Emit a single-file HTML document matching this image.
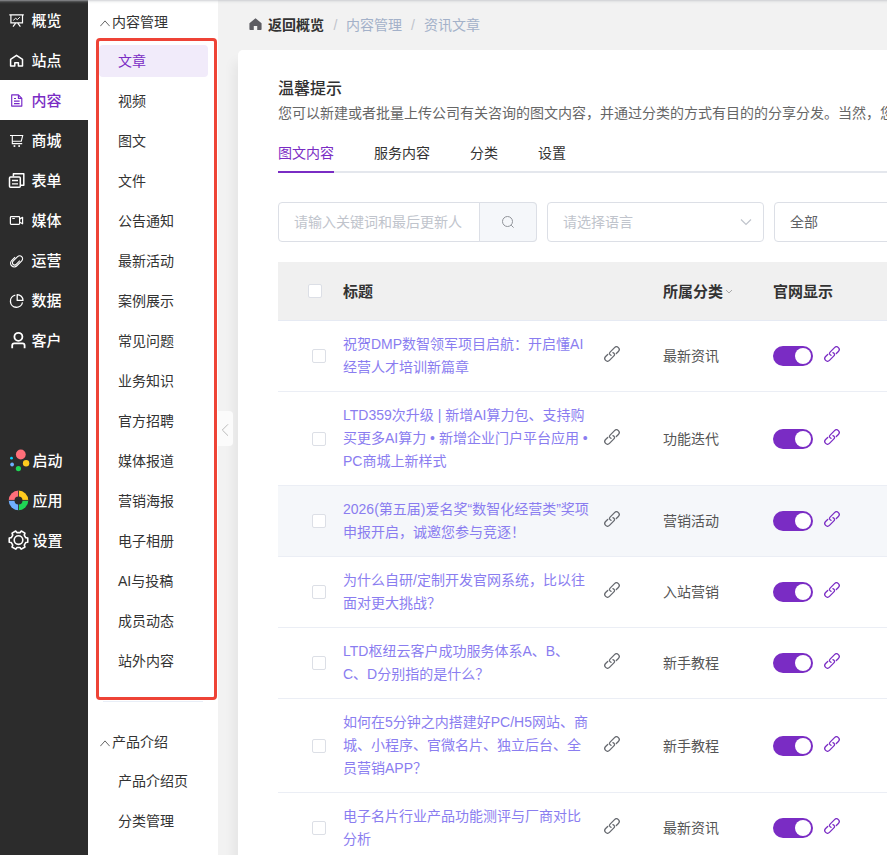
<!DOCTYPE html>
<html lang="zh-CN">
<head>
<meta charset="utf-8">
<title>资讯文章</title>
<style>
*{box-sizing:border-box;margin:0;padding:0}
html,body{width:887px;height:855px;overflow:hidden;background:#f2f2f2;font-family:"Liberation Sans","Noto Sans CJK SC",sans-serif;color:#333;}
.abs{position:absolute}
#nav1{position:absolute;left:0;top:0;width:88px;height:855px;background:#2c2c2c;}
#nav1 .it{position:absolute;left:0;width:88px;height:40px;color:#fff;font-size:15px;font-weight:500;line-height:40px;}
#nav1 .it span{position:absolute;left:31.5px;top:1px;white-space:nowrap}
#nav1 .it svg{position:absolute;}
#nav1 .it.on{background:#fff;color:#7a2cc4;}
#nav2{position:absolute;left:88px;top:0;width:130px;height:855px;background:#fff;}
#nav2 .hd{position:absolute;left:24px;font-size:14px;color:#333;line-height:20px;white-space:nowrap}
#nav2 .it{position:absolute;left:30px;font-size:14px;color:#333;line-height:20px;white-space:nowrap}
#nav2 .it.on{color:#7a2cc4}
#redbox{position:absolute;left:96px;top:38px;width:121px;height:662px;border:3px solid #ee4336;border-radius:4px;}
#card{position:absolute;left:238px;top:50px;width:660px;height:820px;background:#fff;border-radius:5px;box-shadow:-8px 8px 12px -4px rgba(0,0,0,.06);}

#bc{position:absolute;left:0;top:0;font-size:14px;line-height:20px;white-space:nowrap}
#bc span{position:absolute;top:15px}
.tt{position:absolute;left:278px;top:78px;font-size:16px;font-weight:500;color:#303030;line-height:22px;white-space:nowrap}
.desc{position:absolute;left:278px;top:103px;font-size:14px;color:#666;line-height:20px;white-space:nowrap}
.tab{position:absolute;top:143px;font-size:14px;line-height:20px;color:#333;white-space:nowrap}
.tab.on{color:#7a2cc4}
.inp{position:absolute;top:202px;height:40px;border:1px solid #dcdfe6;border-radius:4px;background:#fff;font-size:14px;line-height:38px;color:#c0c4cc;white-space:nowrap}
#thead{position:absolute;left:278px;top:262px;width:620px;height:59px;background:#f0f0f0;border-bottom:1px solid #e6eaf3}
.th{position:absolute;top:282px;font-size:15px;font-weight:700;color:#333;line-height:20px;white-space:nowrap}
.cb{position:absolute;width:14px;height:14px;border:1px solid #dcdfe6;border-radius:2px;background:#fff}
.row{position:absolute;left:278px;width:620px;border-bottom:1px solid #ebeef5}
.row.hl{background:#f5f7fa}
.row .cb{left:34px;top:50%;margin-top:-7px}
.row .ti{position:absolute;left:65px;top:12px;font-size:14px;line-height:23px;color:#8a7df0;white-space:nowrap}
.row .cat{position:absolute;left:385px;top:50%;margin-top:-10px;font-size:14px;line-height:20px;color:#555;white-space:nowrap}
.row .sw{position:absolute;left:495px;top:50%;margin-top:-10px;width:40px;height:20px;border-radius:10px;background:#7a2cc4}
.row .sw i{position:absolute;right:2px;top:2px;width:16px;height:16px;border-radius:8px;background:#fff}
.row svg.lk{position:absolute;top:50%;margin-top:-10px;width:16px;height:16px}
</style>
</head>
<body>
<div id="nav1">
  <div class="it" style="top:0"><svg style="left:8px;top:12px" width="17" height="17" viewBox="8 12 17 17" fill="none" stroke="#fff" stroke-width="1.2"><path d="M9.3 14.9H23.8M10.9 14.9V22.9H22.5V14.9M15.5 23.3L13 26.6M17.9 23.3L20.4 26.6"/><path d="M13.3 20.3L15.6 18.3L17.4 19.6L19.8 17.2" stroke-width="1"/></svg><span>概览</span></div>
  <div class="it" style="top:40px"><svg style="left:8px;top:12px" width="17" height="17" viewBox="8 52 17 17" fill="none" stroke="#fff" stroke-width="1.5" stroke-linejoin="round"><path d="M10.6 66V59.4L16.5 55.3L22.5 59.4V66H18.4V62.7H14.8V66Z"/></svg><span>站点</span></div>
  <div class="it on" style="top:80px"><svg style="left:8px;top:12px" width="17" height="17" viewBox="8 92 17 17" fill="none" stroke="#7628c8" stroke-width="1.15" stroke-linejoin="round"><path d="M11.7 94.9H18.4L21.8 98.3V106.1H11.7Z"/><path d="M18.4 94.9V98.3H21.8"/><path d="M14 98.5H16M14 101.2H19.6M14 103.7H19.6" stroke-width="1.2"/></svg><span>内容</span></div>
  <div class="it" style="top:120px"><svg style="left:8px;top:12px" width="17" height="17" viewBox="8 132 17 17" fill="none" stroke="#fff" stroke-width="1.1"><path d="M10 135.5H22.7L21.3 141.2H12.3M12.3 135.5V143.6H22.2"/><rect x="13.6" y="145.2" width="1.7" height="1.7" fill="#fff" stroke="none"/><rect x="18.3" y="145.2" width="1.7" height="1.7" fill="#fff" stroke="none"/></svg><span>商城</span></div>
  <div class="it" style="top:160px"><svg style="left:8px;top:10px" width="19" height="20" viewBox="8 170 19 20" fill="none" stroke="#fff" stroke-width="1.5" stroke-linejoin="round"><rect x="9.5" y="176.9" width="10.8" height="10.4" rx="1"/><path d="M13.4 176.5V173.8H23.8V185.2H21"/><path d="M12 180.5H18M12 183.8H18" stroke-width="1.3"/></svg><span>表单</span></div>
  <div class="it" style="top:200px"><svg style="left:8px;top:12px" width="17" height="17" viewBox="8 212 17 17" fill="none" stroke="#fff" stroke-width="1.2" stroke-linejoin="round"><rect x="10.4" y="216.7" width="9.2" height="7.7" rx="0.8"/><path d="M19.8 218.9L22.6 217.4V223.8L19.8 222.3"/><path d="M12.3 218.5H14.8" stroke-width="1"/></svg><span>媒体</span></div>
  <div class="it" style="top:240px"><svg style="left:8px;top:12px" width="17" height="17" viewBox="-8.5 -8.5 17 17" fill="none" stroke="#fff" stroke-width="1.1"><g transform="translate(0.1 0.3) rotate(-45)"><path d="M1.5 -3.7H-3.3A3.7 3.7 0 0 0 -3.3 3.7H3.6A2.95 2.95 0 0 0 3.6 -2.2H-2.8A2.2 2.2 0 0 0 -2.8 2.2H2.4"/></g></svg><span>运营</span></div>
  <div class="it" style="top:280px"><svg style="left:8px;top:12px" width="17" height="17" viewBox="8 292 17 17" fill="none" stroke="#fff" stroke-width="1.3"><path d="M15.3 295.2A6.1 6.1 0 1 0 22.5 302.4"/><path d="M17.2 294.6V300.4H23A5.8 5.8 0 0 0 17.2 294.6Z" stroke-linejoin="round"/></svg><span>数据</span></div>
  <div class="it" style="top:320px"><svg style="left:9px;top:10px" width="19" height="20" viewBox="9 330 19 20" fill="none" stroke="#fff" stroke-width="1.8"><circle cx="18.4" cy="336.8" r="4"/><path d="M12.2 348.3V345.4Q12.2 343.3 14.3 343.3H22.5Q24.6 343.3 24.6 345.4V348.3"/></svg><span>客户</span></div>
  <div class="it" style="top:440px"><svg style="left:8px;top:8px" width="23" height="24" viewBox="8 448 23 24"><circle cx="20.8" cy="454.5" r="4.9" fill="#ff6f7a"/><circle cx="26.1" cy="463.3" r="3.2" fill="#ffca1e"/><circle cx="18.4" cy="468.6" r="2.6" fill="#1fd655"/><circle cx="12.1" cy="464.5" r="1.9" fill="#6fb0ff"/><circle cx="11.5" cy="458.2" r="1.4" fill="#0ccfff"/></svg><span style="left:32.5px">启动</span></div>
  <div class="it" style="top:480px"><svg style="left:8px;top:9px" width="22" height="22" viewBox="-11 -11 22 22"><g transform="translate(-0.5 0.4)"><path d="M0 0V-9.8A9.8 9.8 0 0 0 -9.8 0Z" fill="#ff6f7a"/><path d="M0 0H9.8A9.8 9.8 0 0 0 0 -9.8Z" fill="#ffca1e"/><path d="M0 0V9.8A9.8 9.8 0 0 0 9.8 0Z" fill="#1fd655"/><path d="M0 0H-9.8A9.8 9.8 0 0 0 0 9.8Z" fill="#6fb0ff"/><circle r="4" fill="#2c2c2c"/><path d="M-10 0H10M0 -10V10" stroke="#2c2c2c" stroke-width="0.8"/></g></svg><span style="left:32.5px">应用</span></div>
  <div class="it" style="top:520px"><svg style="left:7px;top:9px" width="23" height="23" viewBox="-11.5 -11.5 23 23" fill="none" stroke="#fff" stroke-width="1.6" stroke-linejoin="round"><g transform="translate(0 -0.4)"><path d="M7.19 -2.47 L9.26 -2.14 L9.26 2.14 L7.19 2.47 L5.74 4.99 L6.48 6.95 L2.78 9.08 L1.45 7.46 L-1.45 7.46 L-2.78 9.08 L-6.48 6.95 L-5.74 4.99 L-7.19 2.47 L-9.26 2.14 L-9.26 -2.14 L-7.19 -2.47 L-5.74 -4.99 L-6.48 -6.95 L-2.78 -9.08 L-1.45 -7.46 L1.45 -7.46 L2.78 -9.08 L6.48 -6.95 L5.74 -4.99Z"/><circle r="4.3"/></g></svg><span style="left:32.5px">设置</span></div>
</div>
<div id="nav2">
  <svg class="abs" style="left:12px;top:19.5px" width="10" height="7" viewBox="0 0 10 7" fill="none" stroke="#666" stroke-width="1"><path d="M0.3 6.2L5 0.9L9.7 6.2"/></svg><div class="hd" style="top:12px">内容管理</div>
  <div class="abs" style="left:11px;top:45px;width:109px;height:32px;background:#f1ebfa;border-radius:4px"></div>
  <div class="it on" style="top:51px">文章</div>
  <div class="it" style="top:91px">视频</div>
  <div class="it" style="top:131px">图文</div>
  <div class="it" style="top:171px">文件</div>
  <div class="it" style="top:211px">公告通知</div>
  <div class="it" style="top:251px">最新活动</div>
  <div class="it" style="top:291px">案例展示</div>
  <div class="it" style="top:331px">常见问题</div>
  <div class="it" style="top:371px">业务知识</div>
  <div class="it" style="top:411px">官方招聘</div>
  <div class="it" style="top:451px">媒体报道</div>
  <div class="it" style="top:491px">营销海报</div>
  <div class="it" style="top:531px">电子相册</div>
  <div class="it" style="top:571px">AI与投稿</div>
  <div class="it" style="top:611px">成员动态</div>
  <div class="it" style="top:651px">站外内容</div>
  <svg class="abs" style="left:12px;top:739.5px" width="10" height="7" viewBox="0 0 10 7" fill="none" stroke="#666" stroke-width="1"><path d="M0.3 6.2L5 0.9L9.7 6.2"/></svg><div class="hd" style="top:732px">产品介绍</div>
  <div class="it" style="top:771px">产品介绍页</div>
  <div class="it" style="top:811px">分类管理</div>
</div>
<div class="abs" style="left:103px;top:701px;width:100px;height:1px;background:#e9eef7"></div>
<div id="redbox"></div>
<div id="card"></div>
<div class="abs" style="left:218px;top:411px;width:15px;height:35px;background:#fbfbfb;border-radius:0 4px 4px 0"></div>
<svg class="abs" style="left:221px;top:423px" width="8" height="14" viewBox="0 0 8 14" fill="none" stroke="#bbb" stroke-width="1"><path d="M7 1.3L1.3 7L7 12.7"/></svg>

<div id="bc">
  <svg class="abs" style="left:249.4px;top:18px" width="13" height="12" viewBox="0 0 12 12" preserveAspectRatio="none"><path d="M6 0.3 L11.6 5.2 V11.3 Q11.6 12 10.9 12 H7.6 V8 H4.4 V12 H1.1 Q0.4 12 0.4 11.3 V5.2 Z" fill="#5c5c62"/></svg>
  <span style="left:268px;font-weight:700;color:#333">返回概览</span>
  <span style="left:333.5px;color:#c0c4cc">/</span>
  <span style="left:346px;color:#a3b1c9">内容管理</span>
  <span style="left:411px;color:#c0c4cc">/</span>
  <span style="left:424px;color:#a3b1c9">资讯文章</span>
</div>
<div class="tt">温馨提示</div>
<div class="desc">您可以新建或者批量上传公司有关咨询的图文内容，并通过分类的方式有目的的分享分发。当然，您还可以</div>
<div class="abs" style="left:278px;top:171px;width:620px;height:2px;background:#e4e7ed"></div>
<div class="tab on" style="left:278px">图文内容</div>
<div class="tab" style="left:374px">服务内容</div>
<div class="tab" style="left:470px">分类</div>
<div class="tab" style="left:538px">设置</div>
<div class="abs" style="left:278px;top:171px;width:56px;height:2px;background:#7a2cc4"></div>

<div class="inp" style="left:278px;width:259px"><span style="position:absolute;left:15px;top:0">请输入关键词和最后更新人</span>
  <div class="abs" style="left:200px;top:-1px;width:58px;height:40px;background:#f5f7fa;border:1px solid #dcdfe6;border-radius:0 4px 4px 0"></div>
  <svg class="abs" style="left:221.5px;top:12px" width="14" height="14" viewBox="0 0 14 14" fill="none" stroke="#909399" stroke-width="1"><circle cx="6.5" cy="6.5" r="5"/><path d="M10.2 10.2 L12.6 12.6"/></svg>
</div>
<div class="inp" style="left:547px;width:217px"><span style="position:absolute;left:15px;top:0">请选择语言</span>
  <svg class="abs" style="left:192px;top:15px" width="12" height="8" viewBox="0 0 12 8" fill="none" stroke="#c0c4cc" stroke-width="1.2"><path d="M1 1.5 L6 6.5 L11 1.5"/></svg>
</div>
<div class="inp" style="left:774px;width:217px"><span style="position:absolute;left:15px;top:0;color:#606266">全部</span></div>

<div id="thead"></div>
<div class="cb" style="left:308px;top:284px"></div>
<div class="th" style="left:343px">标题</div>
<div class="th" style="left:663px">所属分类</div>
<svg class="abs" style="left:725px;top:289px" width="8" height="6" viewBox="0 0 8 6" fill="none" stroke="#aaa" stroke-width="1"><path d="M1 1 L4 4 L7 1"/></svg>
<div class="th" style="left:773px">官网显示</div>
<div class="row" style="top:321px;height:71px"><div class="cb"></div><div class="ti">祝贺DMP数智领军项目启航：开启懂AI<br>经营人才培训新篇章</div><svg class="lk" style="left:326px" viewBox="0 0 16 16" fill="none" stroke="#66696f" stroke-width="1.3" stroke-linecap="round"><g transform="rotate(-45 8 8)"><path d="M4.6 5.3H1.7A2.7 2.7 0 0 0 1.7 10.7H8C9.6 10.7 10.4 9.4 9.6 7.7"/><path d="M11.4 10.7H14.3A2.7 2.7 0 0 0 14.3 5.3H8C6.4 5.3 5.6 6.6 6.4 8.3"/></g></svg><div class="cat">最新资讯</div><div class="sw"><i></i></div><svg class="lk" style="left:546px" viewBox="0 0 16 16" fill="none" stroke="#7a2cc4" stroke-width="1.3" stroke-linecap="round"><g transform="rotate(-45 8 8)"><path d="M4.6 5.3H1.7A2.7 2.7 0 0 0 1.7 10.7H8C9.6 10.7 10.4 9.4 9.6 7.7"/><path d="M11.4 10.7H14.3A2.7 2.7 0 0 0 14.3 5.3H8C6.4 5.3 5.6 6.6 6.4 8.3"/></g></svg></div>
<div class="row" style="top:392px;height:94px"><div class="cb"></div><div class="ti">LTD359次升级 | 新增AI算力包、支持购<br>买更多AI算力 • 新增企业门户平台应用 •<br>PC商城上新样式</div><svg class="lk" style="left:326px" viewBox="0 0 16 16" fill="none" stroke="#66696f" stroke-width="1.3" stroke-linecap="round"><g transform="rotate(-45 8 8)"><path d="M4.6 5.3H1.7A2.7 2.7 0 0 0 1.7 10.7H8C9.6 10.7 10.4 9.4 9.6 7.7"/><path d="M11.4 10.7H14.3A2.7 2.7 0 0 0 14.3 5.3H8C6.4 5.3 5.6 6.6 6.4 8.3"/></g></svg><div class="cat">功能迭代</div><div class="sw"><i></i></div><svg class="lk" style="left:546px" viewBox="0 0 16 16" fill="none" stroke="#7a2cc4" stroke-width="1.3" stroke-linecap="round"><g transform="rotate(-45 8 8)"><path d="M4.6 5.3H1.7A2.7 2.7 0 0 0 1.7 10.7H8C9.6 10.7 10.4 9.4 9.6 7.7"/><path d="M11.4 10.7H14.3A2.7 2.7 0 0 0 14.3 5.3H8C6.4 5.3 5.6 6.6 6.4 8.3"/></g></svg></div>
<div class="row hl" style="top:486px;height:71px"><div class="cb"></div><div class="ti">2026(第五届)爱名奖“数智化经营类”奖项<br>申报开启，诚邀您参与竞逐！</div><svg class="lk" style="left:326px" viewBox="0 0 16 16" fill="none" stroke="#66696f" stroke-width="1.3" stroke-linecap="round"><g transform="rotate(-45 8 8)"><path d="M4.6 5.3H1.7A2.7 2.7 0 0 0 1.7 10.7H8C9.6 10.7 10.4 9.4 9.6 7.7"/><path d="M11.4 10.7H14.3A2.7 2.7 0 0 0 14.3 5.3H8C6.4 5.3 5.6 6.6 6.4 8.3"/></g></svg><div class="cat">营销活动</div><div class="sw"><i></i></div><svg class="lk" style="left:546px" viewBox="0 0 16 16" fill="none" stroke="#7a2cc4" stroke-width="1.3" stroke-linecap="round"><g transform="rotate(-45 8 8)"><path d="M4.6 5.3H1.7A2.7 2.7 0 0 0 1.7 10.7H8C9.6 10.7 10.4 9.4 9.6 7.7"/><path d="M11.4 10.7H14.3A2.7 2.7 0 0 0 14.3 5.3H8C6.4 5.3 5.6 6.6 6.4 8.3"/></g></svg></div>
<div class="row" style="top:557px;height:71px"><div class="cb"></div><div class="ti">为什么自研/定制开发官网系统，比以往<br>面对更大挑战？</div><svg class="lk" style="left:326px" viewBox="0 0 16 16" fill="none" stroke="#66696f" stroke-width="1.3" stroke-linecap="round"><g transform="rotate(-45 8 8)"><path d="M4.6 5.3H1.7A2.7 2.7 0 0 0 1.7 10.7H8C9.6 10.7 10.4 9.4 9.6 7.7"/><path d="M11.4 10.7H14.3A2.7 2.7 0 0 0 14.3 5.3H8C6.4 5.3 5.6 6.6 6.4 8.3"/></g></svg><div class="cat">入站营销</div><div class="sw"><i></i></div><svg class="lk" style="left:546px" viewBox="0 0 16 16" fill="none" stroke="#7a2cc4" stroke-width="1.3" stroke-linecap="round"><g transform="rotate(-45 8 8)"><path d="M4.6 5.3H1.7A2.7 2.7 0 0 0 1.7 10.7H8C9.6 10.7 10.4 9.4 9.6 7.7"/><path d="M11.4 10.7H14.3A2.7 2.7 0 0 0 14.3 5.3H8C6.4 5.3 5.6 6.6 6.4 8.3"/></g></svg></div>
<div class="row" style="top:628px;height:71px"><div class="cb"></div><div class="ti">LTD枢纽云客户成功服务体系A、B、<br>C、D分别指的是什么？</div><svg class="lk" style="left:326px" viewBox="0 0 16 16" fill="none" stroke="#66696f" stroke-width="1.3" stroke-linecap="round"><g transform="rotate(-45 8 8)"><path d="M4.6 5.3H1.7A2.7 2.7 0 0 0 1.7 10.7H8C9.6 10.7 10.4 9.4 9.6 7.7"/><path d="M11.4 10.7H14.3A2.7 2.7 0 0 0 14.3 5.3H8C6.4 5.3 5.6 6.6 6.4 8.3"/></g></svg><div class="cat">新手教程</div><div class="sw"><i></i></div><svg class="lk" style="left:546px" viewBox="0 0 16 16" fill="none" stroke="#7a2cc4" stroke-width="1.3" stroke-linecap="round"><g transform="rotate(-45 8 8)"><path d="M4.6 5.3H1.7A2.7 2.7 0 0 0 1.7 10.7H8C9.6 10.7 10.4 9.4 9.6 7.7"/><path d="M11.4 10.7H14.3A2.7 2.7 0 0 0 14.3 5.3H8C6.4 5.3 5.6 6.6 6.4 8.3"/></g></svg></div>
<div class="row" style="top:699px;height:94px"><div class="cb"></div><div class="ti">如何在5分钟之内搭建好PC/H5网站、商<br>城、小程序、官微名片、独立后台、全<br>员营销APP？</div><svg class="lk" style="left:326px" viewBox="0 0 16 16" fill="none" stroke="#66696f" stroke-width="1.3" stroke-linecap="round"><g transform="rotate(-45 8 8)"><path d="M4.6 5.3H1.7A2.7 2.7 0 0 0 1.7 10.7H8C9.6 10.7 10.4 9.4 9.6 7.7"/><path d="M11.4 10.7H14.3A2.7 2.7 0 0 0 14.3 5.3H8C6.4 5.3 5.6 6.6 6.4 8.3"/></g></svg><div class="cat">新手教程</div><div class="sw"><i></i></div><svg class="lk" style="left:546px" viewBox="0 0 16 16" fill="none" stroke="#7a2cc4" stroke-width="1.3" stroke-linecap="round"><g transform="rotate(-45 8 8)"><path d="M4.6 5.3H1.7A2.7 2.7 0 0 0 1.7 10.7H8C9.6 10.7 10.4 9.4 9.6 7.7"/><path d="M11.4 10.7H14.3A2.7 2.7 0 0 0 14.3 5.3H8C6.4 5.3 5.6 6.6 6.4 8.3"/></g></svg></div>
<div class="row" style="top:793px;height:71px"><div class="cb"></div><div class="ti">电子名片行业产品功能测评与厂商对比<br>分析</div><svg class="lk" style="left:326px" viewBox="0 0 16 16" fill="none" stroke="#66696f" stroke-width="1.3" stroke-linecap="round"><g transform="rotate(-45 8 8)"><path d="M4.6 5.3H1.7A2.7 2.7 0 0 0 1.7 10.7H8C9.6 10.7 10.4 9.4 9.6 7.7"/><path d="M11.4 10.7H14.3A2.7 2.7 0 0 0 14.3 5.3H8C6.4 5.3 5.6 6.6 6.4 8.3"/></g></svg><div class="cat">最新资讯</div><div class="sw"><i></i></div><svg class="lk" style="left:546px" viewBox="0 0 16 16" fill="none" stroke="#7a2cc4" stroke-width="1.3" stroke-linecap="round"><g transform="rotate(-45 8 8)"><path d="M4.6 5.3H1.7A2.7 2.7 0 0 0 1.7 10.7H8C9.6 10.7 10.4 9.4 9.6 7.7"/><path d="M11.4 10.7H14.3A2.7 2.7 0 0 0 14.3 5.3H8C6.4 5.3 5.6 6.6 6.4 8.3"/></g></svg></div>

<div class="abs" style="left:0;top:0;width:887px;height:1px;background:rgba(190,192,198,.54);z-index:9"></div>
<div class="abs" style="left:0;top:1px;width:887px;height:1px;background:rgba(190,192,198,.26);z-index:9"></div>
<div class="abs" style="left:0;top:2px;width:887px;height:1px;background:rgba(190,192,198,.10);z-index:9"></div>
<div class="abs" style="left:0;top:3px;width:887px;height:1px;background:rgba(190,192,198,.03);z-index:9"></div>
</body>
</html>
